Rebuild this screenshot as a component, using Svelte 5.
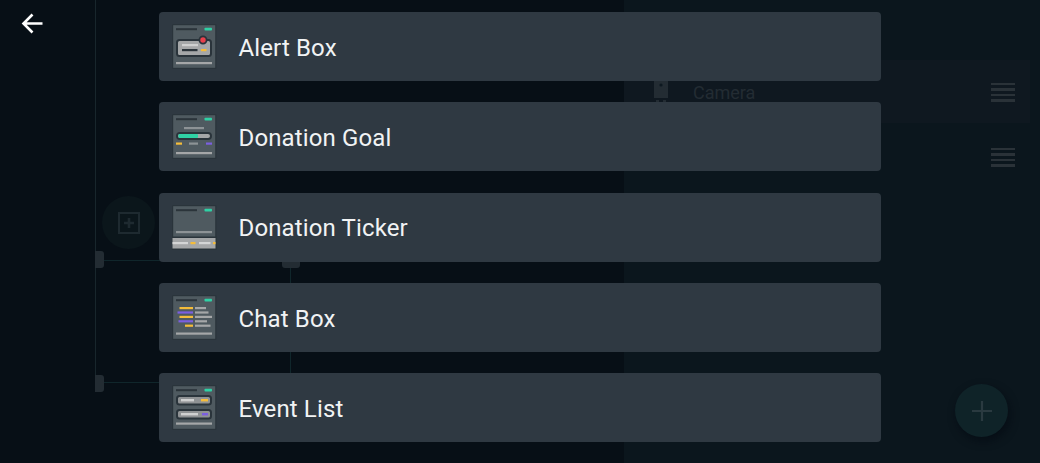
<script>
  const widgets = [
    { name: 'Alert Box', kind: 'alert' },
    { name: 'Donation Goal', kind: 'goal' },
    { name: 'Donation Ticker', kind: 'ticker' },
    { name: 'Chat Box', kind: 'chat' },
    { name: 'Event List', kind: 'events' }
  ];

  const chatRows = [
    { x: 7.5, w: 13.5, c: '#f5bd3a', rw: 11 },
    { x: 5.5, w: 15.5, c: '#7b5fe0', rw: 13.5 },
    { x: 7.5, w: 13.5, c: '#f5bd3a', rw: 17 },
    { x: 6.5, w: 14.5, c: '#7b5fe0', rw: 12 },
    { x: 13, w: 8, c: '#f5bd3a', rw: 15.5 }
  ];
</script>

<div class="scene">
  <div class="canvas">
    <span class="rail"></span>
    <span class="wire h1"></span>
    <span class="wire h2"></span>
    <span class="wire v1"></span>
    <span class="knob k1"></span>
    <span class="knob k2"></span>
    <span class="knob k3"></span>
    <div class="add-node">
      <svg width="22" height="22" viewBox="0 0 22 22" fill="none" stroke="#1e2a30" stroke-width="2">
        <rect x="1" y="1" width="20" height="20" />
        <path d="M11 6v10M6 11h10" stroke-width="2.6" />
      </svg>
    </div>
  </div>

  <div class="panel">
    <div class="source active">
      <svg class="cam" width="16" height="22" viewBox="0 0 16 22" fill="#232c33">
        <path d="M1 0h14v17H1zM3 19h3v3H3zM10 19h3v3h-3z" />
        <circle cx="8" cy="4" r="1.6" fill="#0d1820" />
      </svg>
      <span class="label">Camera</span>
      <span class="handle"><i></i><i></i><i></i><i></i></span>
    </div>
    <div class="source">
      <span class="handle"><i></i><i></i><i></i><i></i></span>
    </div>
    <div class="fab">
      <svg width="20" height="20" viewBox="0 0 20 20" stroke="#2a3a40" stroke-width="2.2">
        <path d="M10 0v20M0 10h20" />
      </svg>
    </div>
  </div>

  <button class="back" aria-label="Back">
    <svg width="24" height="24" viewBox="0 0 24 24" fill="none" stroke="#fff" stroke-width="2.6">
      <path d="M22.5 12.5H3.5M12.5 3.5l-9 9 9 9" />
    </svg>
  </button>

  <div class="list">
    {#each widgets as w}
      <div class="card">
        <svg class="thumb" width="45" height="45" viewBox="0 0 45 45">
          <rect x="0" y="0" width="44.5" height="45" rx="1.5" fill="#2a343b" />
          <rect x="1.2" y="1.2" width="42" height="42.6" fill="#4f5a60" />
          <rect x="4" y="4.2" width="21" height="2" fill="#2b343a" />
          <rect x="32.5" y="3.8" width="7.5" height="2.8" rx="0.8" fill="#2fd1a5" />

          {#if w.kind === 'alert'}
            <rect x="5" y="16" width="34" height="16" rx="2.5" fill="#a5a7a8" stroke="#2a343b" stroke-width="2" />
            <rect x="10" y="20" width="16" height="2.2" fill="#cfd0d0" />
            <rect x="10" y="25" width="15.5" height="2.2" fill="#2b343a" />
            <rect x="29" y="25" width="5.5" height="2.2" fill="#f5bd3a" />
            <circle cx="31" cy="16" r="3.6" fill="#e8414c" stroke="#2a343b" stroke-width="1.8" />
            <rect x="4" y="38" width="36" height="2.2" fill="#a5a7a8" />
          {:else if w.kind === 'goal'}
            <rect x="12" y="13" width="20" height="2.2" fill="#8d9396" />
            <rect x="5" y="19" width="34" height="6" rx="3" fill="#a5a7a8" stroke="#2a343b" stroke-width="2" />
            <rect x="6.5" y="20" width="19.5" height="4" rx="1" fill="#2fd1a5" />
            <rect x="4" y="28.5" width="6" height="2.2" fill="#f5bd3a" />
            <rect x="17" y="28.5" width="9" height="2.2" fill="#8d9396" />
            <rect x="34" y="28.5" width="6" height="2.2" fill="#7b5fe0" />
            <rect x="4" y="38" width="36" height="2.2" fill="#a5a7a8" />
          {:else if w.kind === 'ticker'}
            <rect x="0" y="31.5" width="44.5" height="13.5" fill="#2a343b" />
            <rect x="4" y="26" width="36" height="2.2" fill="#8d9396" />
            <rect x="0.5" y="33" width="43" height="10.5" fill="#a5a7a8" />
            <rect x="0.5" y="37" width="15.5" height="2.2" fill="#d4d5d5" />
            <rect x="18.5" y="37" width="5" height="2.2" fill="#f5bd3a" />
            <rect x="27" y="37" width="11.5" height="2.2" fill="#d4d5d5" />
            <rect x="41" y="37" width="2.5" height="2.2" fill="#f5bd3a" />
          {:else if w.kind === 'chat'}
            {#each chatRows as r, i}
              <rect x={r.x} y={12 + i * 4.4} width={r.w} height="2.2" fill={r.c} />
              <rect x="23" y={12 + i * 4.4} width={r.rw} height="2.2" fill="#a5a7a8" />
            {/each}
            <rect x="4" y="37.5" width="36" height="2.2" fill="#a5a7a8" />
          {:else}
            <rect x="5" y="11" width="34" height="8.5" rx="2.5" fill="#8f9294" stroke="#2a343b" stroke-width="2" />
            <rect x="9" y="14" width="13" height="2.4" fill="#cfd0d0" />
            <rect x="29" y="14" width="7" height="2.4" fill="#f5bd3a" />
            <rect x="5" y="25" width="34" height="8.5" rx="2.5" fill="#8f9294" stroke="#2a343b" stroke-width="2" />
            <rect x="9" y="28" width="17" height="2.4" fill="#cfd0d0" />
            <rect x="30" y="28" width="6" height="2.4" fill="#7b5fe0" />
            <rect x="4" y="37.5" width="36" height="2.2" fill="#a5a7a8" />
          {/if}
        </svg>
        <span class="name">{w.name}</span>
      </div>
    {/each}
  </div>
</div>

<style>
  :global(body) { margin: 0; background: #070f16; }

  .scene {
    position: relative;
    width: 1040px;
    height: 463px;
    overflow: hidden;
    display: grid;
    grid-template-columns: 624px 1fr;
    font-family: Roboto, "Liberation Sans", sans-serif;
  }

  .canvas { position: relative; background: #070f16; }
  .rail { position: absolute; left: 95px; top: 0; width: 1px; height: 385px; background: #18262c; }
  .wire { position: absolute; background: #10262b; }
  .h1 { left: 104px; top: 260px; width: 60px; height: 1px; }
  .h2 { left: 104px; top: 382px; width: 60px; height: 1px; }
  .v1 { left: 290px; top: 266px; width: 1px; height: 110px; }
  .knob { position: absolute; background: #232c33; border-radius: 0 3px 3px 0; }
  .k1 { left: 95px; top: 251px; width: 9px; height: 17px; }
  .k2 { left: 95px; top: 375px; width: 9px; height: 17px; }
  .k3 { left: 282px; top: 258px; width: 18px; height: 10px; border-radius: 0 0 3px 3px; }
  .add-node {
    position: absolute; left: 102px; top: 196px;
    width: 53px; height: 53px; border-radius: 50%;
    background: #0b161b;
    display: flex; align-items: center; justify-content: center;
  }

  .panel { position: relative; background: #0b161d; padding-top: 60px; }
  .source {
    height: 63px; margin-right: 10px;
    display: flex; align-items: center;
    padding: 1px 15px 0 29px;
    box-sizing: border-box;
    position: relative;
  }
  .source + .source { margin-top: 2px; }
  .active { background: #0f1820; }
  .cam { position: absolute; left: 29px; top: 21px; }
  .label { position: absolute; left: 69px; top: 22px; color: #232c33; font-size: 18px; line-height: 22px; }
  .handle { margin-left: auto; display: flex; flex-direction: column; gap: 3px; width: 24px; }
  .handle i { display: block; height: 2.5px; background: #2a3238; }
  .fab {
    position: absolute; left: 331px; top: 384px;
    width: 53px; height: 53px; border-radius: 50%;
    background: #0f2328;
    box-shadow: 2px 4px 8px rgba(4, 8, 16, .6);
    display: flex; align-items: center; justify-content: center;
  }

  .back {
    position: absolute; left: 20px; top: 11px;
    padding: 0; border: none; background: none;
    display: flex; width: 24px; height: 24px;
  }

  .list {
    position: absolute; left: 159px; top: 12px; width: 722px;
    display: flex; flex-direction: column; gap: 21.25px;
  }
  .card {
    height: 69px; border-radius: 4px;
    background: #2f3942;
    display: flex; align-items: center;
    padding-left: 13px; box-sizing: border-box;
  }
  .thumb { flex: none; filter: blur(.3px); }
  .name { margin-left: 21.5px; padding-top: 2.5px; color: #f1f3f4; font-size: 24px; letter-spacing: .13px; }
</style>
